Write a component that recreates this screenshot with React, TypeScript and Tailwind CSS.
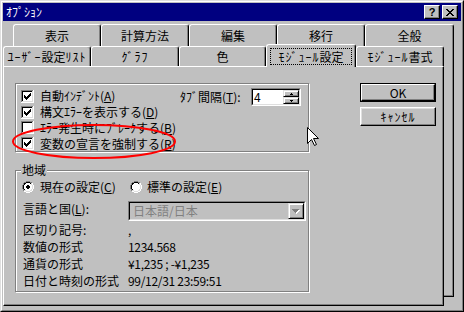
import React from "react";

function Radio({ checked }: { checked: boolean }) {
  const px: React.ReactElement[] = [];
  for (let y = 0; y < 12; y++)
    for (let x = 0; x < 12; x++) {
      const d = Math.hypot(x - 5.5, y - 5.5);
      const tl = x + y < 11;
      let c: string | null = null;
      if (d >= 5 && d < 5.9) c = tl ? "#808080" : "#ffffff";
      else if (d >= 4 && d < 5) c = tl ? "#000000" : "#dfdfdf";
      else if (d < 4) c = checked && d < 2 ? "#000000" : "#ffffff";
      if (c) px.push(<rect key={`${x}-${y}`} x={x} y={y} width={1} height={1} fill={c} />);
    }
  return (
    <svg width={12} height={12} shapeRendering="crispEdges" className="shrink-0 block">
      {px}
    </svg>
  );
}

function Checkbox({ checked, className }: { checked: boolean; className: string }) {
  const cols = [5, 6, 7, 6, 5, 4, 3];
  return (
    <svg width={13} height={13} shapeRendering="crispEdges" className={`shrink-0 block ${className}`}>
      <rect x={0} y={0} width={13} height={13} fill="#ffffff" />
      <rect x={0} y={0} width={12} height={1} fill="#808080" />
      <rect x={0} y={0} width={1} height={12} fill="#808080" />
      <rect x={1} y={1} width={10} height={1} fill="#000000" />
      <rect x={1} y={1} width={1} height={10} fill="#000000" />
      <rect x={1} y={11} width={11} height={1} fill="#dfdfdf" />
      <rect x={11} y={1} width={1} height={11} fill="#dfdfdf" />
      {checked &&
        cols.map((y, i) => <rect key={i} x={3 + i} y={y} width={1} height={3} fill="#000000" />)}
    </svg>
  );
}

function SpinBtn({ up }: { up: boolean }) {
  return (
    <div className="h-[7px] bg-[#c0c0c0] border border-t-[#dfdfdf] border-l-[#dfdfdf] border-r-black border-b-black shadow-[inset_1px_1px_0_#fff,inset_-1px_-1px_0_#808080] flex items-center justify-center">
      <svg width={3} height={2} shapeRendering="crispEdges" className="block">
        {up ? (
          <>
            <rect x={1} y={0} width={1} height={1} fill="#000" />
            <rect x={0} y={1} width={3} height={1} fill="#000" />
          </>
        ) : (
          <>
            <rect x={0} y={0} width={3} height={1} fill="#000" />
            <rect x={1} y={1} width={1} height={1} fill="#000" />
          </>
        )}
      </svg>
    </div>
  );
}

function DropBtn() {
  const rows = [7, 5, 3, 1];
  return (
    <div className="w-[16px] h-[16px] bg-[#c0c0c0] border border-t-[#dfdfdf] border-l-[#dfdfdf] border-r-black border-b-black shadow-[inset_1px_1px_0_#fff,inset_-1px_-1px_0_#808080] flex items-center justify-center">
      <svg width={8} height={5} shapeRendering="crispEdges" className="block">
        {rows.map((w, i) => (
          <rect key={"w" + i} x={(7 - w) / 2 + 1} y={i + 1} width={w} height={1} fill="#ffffff" />
        ))}
        {rows.map((w, i) => (
          <rect key={"g" + i} x={(7 - w) / 2} y={i} width={w} height={1} fill="#808080" />
        ))}
      </svg>
    </div>
  );
}

function CloseGlyph() {
  const rows: [number, number][][] = [
    [[0, 2], [6, 2]],
    [[1, 2], [5, 2]],
    [[2, 4]],
    [[3, 2]],
    [[2, 4]],
    [[1, 2], [5, 2]],
    [[0, 2], [6, 2]],
  ];
  return (
    <svg width={8} height={7} shapeRendering="crispEdges" className="block">
      {rows.flatMap((r, y) => r.map(([x, w], j) => <rect key={`${y}-${j}`} x={x} y={y} width={w} height={1} fill="#000" />))}
    </svg>
  );
}

function K({ children }: { children: React.ReactNode }) {
  return <span className="tracking-[1px]">{children}</span>;
}

export default function App() {
  const checks = [
    { label: <>自動ｲﾝﾃﾞﾝﾄ(<u>A</u>)</>, checked: true, mt: "mt-[2px]" },
    { label: <>構文ｴﾗｰを表示する(<u>D</u>)</>, checked: true, mt: "mt-[2px]" },
    { label: <>ｴﾗｰ発生時にﾌﾞﾚｰｸする(<u>B</u>)</>, checked: false, mt: "mt-[1px]" },
    { label: <>変数の宣言を強制する(<u>R</u>)</>, checked: true, mt: "mt-[1px]" },
  ];
  const info = [
    ["区切り記号:", ","],
    ["数値の形式", "1234.568"],
    ["通貨の形式", "¥1,235 ; -¥1,235"],
    ["日付と時刻の形式", "99/12/31 23:59:51"],
  ];
  const row1 = ["表示", "計算方法", "編集", "移行", "全般"];

  return (
    <div className="relative w-[464px] h-[312px] overflow-hidden bg-[#c0c0c0] border border-t-[#dfdfdf] border-l-[#dfdfdf] border-r-black border-b-black font-['Noto_Sans_CJK_JP',sans-serif] text-[12px] text-black">
      <div className="h-full border border-t-white border-l-white border-r-[#808080] border-b-[#808080] p-[1px] flex flex-col">
        {/* title bar */}
        <div className="h-[18px] shrink-0 bg-[#000080] flex items-center pl-[3px]">
          <span className="text-white leading-[14px]">ｵﾌﾟｼｮﾝ</span>
          <div className="ml-auto mr-[3px] flex gap-[2px]">
            <div className="w-[16px] h-[14px] bg-[#c0c0c0] border border-t-white border-l-white border-r-black border-b-black shadow-[inset_-1px_-1px_0_#808080] flex items-center justify-center">
              <span className="font-['Liberation_Sans',sans-serif] font-bold text-[11px] leading-[11px]">?</span>
            </div>
            <div className="w-[16px] h-[14px] bg-[#c0c0c0] border border-t-white border-l-white border-r-black border-b-black shadow-[inset_-1px_-1px_0_#808080] flex items-center justify-center">
              <CloseGlyph />
            </div>
          </div>
        </div>

        {/* tab control */}
        <div className="mt-[3px] grid">
          {/* back layer (row 1) */}
          <div className="col-start-1 row-start-1 ml-[10px] w-[441px] h-[273px] flex flex-col">
            <div className="flex h-[23px] shrink-0">
              {row1.map((t, i) => (
                <div
                  key={t}
                  className={`${i === 4 ? "w-[89px]" : "w-[88px]"} h-full bg-[#c0c0c0] border-t border-l border-r border-t-white border-l-white border-r-black rounded-t-[3px] shadow-[inset_-1px_0_0_#808080] flex items-center justify-center leading-[14px]`}
                >
                  {t}
                </div>
              ))}
            </div>
            <div className="flex-1 bg-[#c0c0c0] border-r border-b border-r-black border-b-black shadow-[inset_-1px_-1px_0_#808080]" />
          </div>

          {/* front layer (row 2 + page) */}
          <div className="col-start-1 row-start-1 mt-[20px] w-[441px] h-[262px] flex flex-col">
            <div className="flex items-end h-[22px] shrink-0">
              <div className="w-[88px] h-[20px] bg-[#c0c0c0] border-t border-l border-r border-t-white border-l-white border-r-black rounded-t-[3px] shadow-[inset_-1px_0_0_#808080] flex items-center justify-center leading-[14px] whitespace-nowrap">
                <K>ﾕｰｻﾞｰ</K>設定<K>ﾘｽﾄ</K>
              </div>
              <div className="w-[88px] h-[20px] bg-[#c0c0c0] border-t border-l border-r border-t-white border-l-white border-r-black rounded-t-[3px] shadow-[inset_-1px_0_0_#808080] flex items-center justify-center leading-[14px]">
                <K>ｸﾞﾗﾌ</K>
              </div>
              <div className="w-[87px] h-[20px] bg-[#c0c0c0] border-t border-l border-r border-t-white border-l-white border-r-black rounded-t-[3px] shadow-[inset_-1px_0_0_#808080] flex items-center justify-center leading-[14px]">
                色
              </div>
              <div className="relative z-10 -mb-px w-[90px] h-[23px] self-start bg-[#c0c0c0] border-t border-l border-r border-t-white border-l-white border-r-black rounded-t-[3px] shadow-[inset_-1px_0_0_#808080] pt-[3px] pl-[3px]">
                <div className="w-[82px] h-[17px] border border-dotted border-black flex items-center justify-center leading-[14px] whitespace-nowrap">
                  <K>ﾓｼﾞｭｰﾙ</K>設定
                </div>
              </div>
              <div className="w-[88px] h-[20px] bg-[#c0c0c0] border-t border-l border-r border-t-white border-l-white border-r-black rounded-t-[3px] shadow-[inset_-1px_0_0_#808080] flex items-center justify-center leading-[14px] whitespace-nowrap">
                <K>ﾓｼﾞｭｰﾙ</K>書式
              </div>
            </div>

            <div className="flex-1 bg-[#c0c0c0] border border-t-white border-l-white border-r-black border-b-black shadow-[inset_-1px_-1px_0_#808080] flex items-start">
              <div className="ml-[11px] mt-[16px] flex flex-col">
                {/* group 1 */}
                <div className="w-[294px] h-[69px] border border-[#808080] shadow-[inset_1px_1px_0_#fff,1px_1px_0_#fff] flex items-start">
                  <div className="w-[164px] pl-[5px] pt-[4px] flex flex-col">
                    {checks.map((c, i) => (
                      <div key={i} className="h-[16px] shrink-0 flex items-start">
                        <Checkbox checked={c.checked} className={c.mt} />
                        <span className="ml-[6px] mt-[1px] leading-[13px] whitespace-nowrap">{c.label}</span>
                      </div>
                    ))}
                  </div>
                  <div className="pt-[4px] flex items-center">
                    <div className="w-[71px] h-[18px] flex items-center leading-[14px] whitespace-nowrap">
                      ﾀﾌﾞ間隔(<u>T</u>):
                    </div>
                    <div className="w-[50px] h-[18px] border border-t-[#808080] border-l-[#808080] border-r-white border-b-white">
                      <div className="h-full border border-t-black border-l-black border-r-[#dfdfdf] border-b-[#dfdfdf] bg-white flex">
                        <span className="flex-1 pl-[1px] leading-[14px]">4</span>
                        <div className="w-[16px] flex flex-col">
                          <SpinBtn up={true} />
                          <SpinBtn up={false} />
                        </div>
                      </div>
                    </div>
                  </div>
                </div>

                {/* group 2 */}
                <div className="relative mt-[18px] w-[294px] h-[122px] border border-[#808080] shadow-[inset_1px_1px_0_#fff,1px_1px_0_#fff] flex flex-col">
                  <span className="absolute left-[5px] -top-[8px] bg-[#c0c0c0] px-[1px] leading-[14px]">地域</span>
                  <div className="mt-[10px] h-[12px] flex items-center">
                    <div className="w-[114px] pl-[6px] flex items-center">
                      <Radio checked={true} />
                      <span className="ml-[6px] leading-[14px] whitespace-nowrap">
                        現在の設定(<u>C</u>)
                      </span>
                    </div>
                    <div className="flex items-center">
                      <Radio checked={false} />
                      <span className="ml-[5px] leading-[14px] whitespace-nowrap">
                        標準の設定(<u>E</u>)
                      </span>
                    </div>
                  </div>
                  <div className="mt-[8px] h-[20px] flex items-start">
                    <div className="w-[112px] pl-[7px] mt-[1px] leading-[14px] whitespace-nowrap">
                      言語と国(<u>L</u>):
                    </div>
                    <div className="w-[178px] h-[20px] border border-t-[#808080] border-l-[#808080] border-r-white border-b-white">
                      <div className="h-full border border-t-black border-l-black border-r-[#dfdfdf] border-b-[#dfdfdf] bg-[#c0c0c0] flex">
                        <span className="flex-1 pl-[3px] leading-[15px] text-[#808080]">日本語/日本</span>
                        <DropBtn />
                      </div>
                    </div>
                  </div>
                  {info.map(([l, v]) => (
                    <div key={l} className="h-[17px] flex items-center">
                      <div className="w-[112px] pl-[7px] leading-[14px] whitespace-nowrap">{l}</div>
                      <div className="leading-[14px] whitespace-nowrap tracking-[-0.3px]">{v}</div>
                    </div>
                  ))}
                </div>
              </div>

              {/* buttons */}
              <div className="ml-[51px] mt-[16px] flex flex-col gap-[5px]">
                <div className="w-[76px] h-[19px] border border-black">
                  <div className="h-full bg-[#c0c0c0] border border-t-white border-l-white border-r-black border-b-black shadow-[inset_-1px_-1px_0_#808080] flex items-center justify-center leading-[13px]">
                    OK
                  </div>
                </div>
                <div className="w-[76px] h-[19px] bg-[#c0c0c0] border border-t-white border-l-white border-r-black border-b-black shadow-[inset_-1px_-1px_0_#808080,inset_1px_1px_0_#dfdfdf] flex items-center justify-center leading-[13px]">
                  <K>ｷｬﾝｾﾙ</K>
                </div>
              </div>
            </div>
          </div>
        </div>
      </div>

      {/* red hand-drawn ellipse */}
      <svg className="absolute -left-px -top-px pointer-events-none" width={464} height={312}>
        <ellipse cx={94} cy={141.5} rx={81} ry={16.5} fill="none" stroke="#ff0000" strokeWidth={2} />
      </svg>

      {/* mouse cursor */}
      <svg className="absolute left-[306px] top-[126px] pointer-events-none" width={13} height={20}>
        <path
          d="M0.5 0.5 V16.5 L4.5 12.5 L7.5 18.5 L9.5 17.5 L6.5 11.5 H11.5 Z"
          fill="#ffffff"
          stroke="#000000"
          strokeWidth={1}
          strokeLinejoin="miter"
        />
      </svg>
    </div>
  );
}
